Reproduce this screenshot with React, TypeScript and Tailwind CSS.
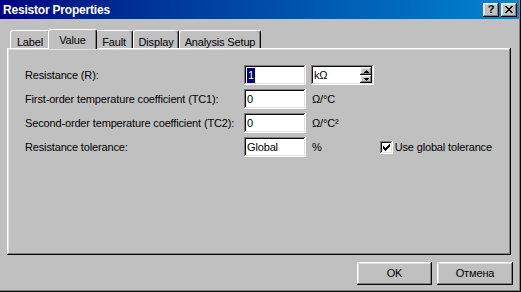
import React from "react";

const raised =
    "bg-[#c0c0c0] shadow-[inset_-1px_-1px_#0a0a0a,inset_1px_1px_#ffffff,inset_-2px_-2px_#808080,inset_2px_2px_#dfdfdf]";
const sunken =
    "bg-white shadow-[inset_-1px_-1px_#ffffff,inset_1px_1px_#808080,inset_-2px_-2px_#dfdfdf,inset_2px_2px_#0a0a0a]";

function Field({ value, selected }: { value: string; selected?: boolean }) {
    return (
        <div className={`w-[62px] h-[20px] ${sunken} flex items-center pl-[3px]`}>
            {selected ? (
                <span className="bg-[#000080] text-white px-[1px] leading-[15px]">{value}</span>
            ) : (
                <span className="leading-[15px]">{value}</span>
            )}
        </div>
    );
}

function Tab({ label, width, active }: { label: string; width: string; active?: boolean }) {
    if (active) {
        return (
            <div
                className={`${width} h-[20px] -mx-[2px] relative z-10 -mb-px bg-[#c0c0c0] border-l border-t border-white rounded-t-[3px] border-r border-r-[#0a0a0a] shadow-[inset_-1px_0_#808080] flex items-start justify-center pt-[2px]`}
            >
                {label}
            </div>
        );
    }
    return (
        <div
            className={`${width} h-[18px] mt-[2px] bg-[#c0c0c0] border-l border-t border-white rounded-t-[3px] border-r border-r-[#0a0a0a] shadow-[inset_-1px_0_#808080] flex items-start justify-center pt-[3px]`}
        >
            {label}
        </div>
    );
}

export default function App() {
    return (
        <div
            className="w-[521px] h-[292px] bg-[#c0c0c0] text-[11px] tracking-[-0.15px] text-black flex flex-col shadow-[inset_-1px_-1px_#0a0a0a,inset_-2px_-2px_#808080]"
            style={{ fontFamily: '"Liberation Sans", Arial, sans-serif' }}
        >
            {/* Title bar */}
            <div className="h-[19px] mr-[2px] flex items-center pl-[3px] pr-[2px] bg-gradient-to-r from-[#000080] to-[#1084d0]">
                <span className="text-white font-bold text-[12px] tracking-[-0.2px]">Resistor Properties</span>
                <div className="ml-auto flex gap-[2px]">
                    <div className={`w-[16px] h-[14px] ${raised} flex items-center justify-center font-bold text-[11px] leading-none`}>
                        ?
                    </div>
                    <div className={`w-[16px] h-[14px] ${raised} flex items-center justify-center`}>
                        <svg width="8" height="7" viewBox="0 0 8 7" shapeRendering="crispEdges">
                            <path d="M0 0h2v1H0zM6 0h2v1H6zM1 1h2v1H1zM5 1h2v1H5zM2 2h4v1H2zM3 3h2v1H3zM2 4h4v1H2zM1 5h2v1H1zM5 5h2v1H5zM0 6h2v1H0zM6 6h2v1H6z" fill="#000" />
                        </svg>
                    </div>
                </div>
            </div>

            {/* Tabs */}
            <div className="flex items-end pl-[10px] mt-[9px]">
                <Tab label="Label" width="w-[40px]" />
                <Tab label="Value" width="w-[49px]" active />
                <Tab label="Fault" width="w-[38px]" />
                <Tab label="Display" width="w-[46px]" />
                <Tab label="Analysis Setup" width="w-[82px]" />
            </div>

            {/* Panel */}
            <div className={`ml-[7px] w-[504px] h-[207px] ${raised} pl-[18px] pt-[17px] flex flex-col gap-[4px]`}>
                <div className="flex items-center h-[20px]">
                    <div className="w-[219px]">Resistance (R):</div>
                    <Field value="1" selected />
                    <div className={`ml-[5px] w-[63px] h-[20px] ${sunken} flex items-center pl-[3px] pr-[2px]`}>
                        <span>kΩ</span>
                        <div className="ml-auto flex flex-col">
                            <div className={`w-[12px] h-[8px] ${raised} flex items-center justify-center`}>
                                <svg width="5" height="3" viewBox="0 0 5 3" shapeRendering="crispEdges">
                                    <path d="M2 0h1v1H2zM1 1h3v1H1zM0 2h5v1H0z" fill="#000" />
                                </svg>
                            </div>
                            <div className={`w-[12px] h-[8px] ${raised} flex items-center justify-center`}>
                                <svg width="5" height="3" viewBox="0 0 5 3" shapeRendering="crispEdges">
                                    <path d="M0 0h5v1H0zM1 1h3v1H1zM2 2h1v1H2z" fill="#000" />
                                </svg>
                            </div>
                        </div>
                    </div>
                </div>
                <div className="flex items-center h-[20px]">
                    <div className="w-[219px]">First-order temperature coefficient (TC1):</div>
                    <Field value="0" />
                    <span className="ml-[6px]">Ω/°C</span>
                </div>
                <div className="flex items-center h-[20px]">
                    <div className="w-[219px]">Second-order temperature coefficient (TC2):</div>
                    <Field value="0" />
                    <span className="ml-[6px]">Ω/°C²</span>
                </div>
                <div className="flex items-center h-[20px]">
                    <div className="w-[219px]">Resistance tolerance:</div>
                    <Field value="Global" />
                    <span className="ml-[6px]">%</span>
                    <div className={`ml-[58px] w-[13px] h-[13px] ${sunken} flex items-center justify-center`}>
                        <svg width="7" height="7" viewBox="0 0 7 7" shapeRendering="crispEdges">
                            <path d="M6 0h1v3H6zM5 1h1v3H5zM4 2h1v3H4zM3 3h1v3H3zM2 4h1v3H2zM1 3h1v3H1zM0 2h1v3H0z" fill="#000" />
                        </svg>
                    </div>
                    <span className="ml-[2px]">Use global tolerance</span>
                </div>
            </div>

            {/* Buttons */}
            <div className="flex justify-end gap-[5px] mt-[7px] pr-[8px]">
                <div className={`w-[75px] h-[23px] ${raised} flex items-center justify-center`}>OK</div>
                <div className={`w-[76px] h-[23px] ${raised} flex items-center justify-center`}>Отмена</div>
            </div>
        </div>
    );
}
